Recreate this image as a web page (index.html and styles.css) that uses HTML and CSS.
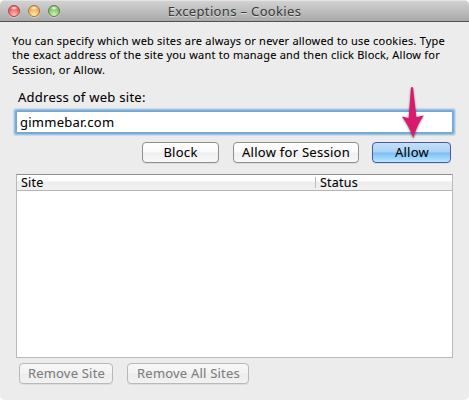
FILE: index.html
```html
<!DOCTYPE html>
<html lang="en">
<head>
<meta charset="utf-8">
<title>Exceptions – Cookies</title>
<link rel="stylesheet" href="styles.css">
</head>
<body>
<main class="window">
  <header class="titlebar">
    <div class="lights"><i class="light red"></i><i class="light amber"></i><i class="light green"></i></div>
    <h1 class="title">Exceptions – Cookies</h1>
  </header>
  <p class="intro">You can specify which web sites are always or never allowed to use cookies. Type<br>the exact address of the site you want to manage and then click Block, Allow for<br>Session, or Allow.</p>
  <label class="label" for="site">Address of web site:</label>
  <input class="field" id="site" type="text" value="gimmebar.com">
  <div class="actions">
    <button class="btn block">Block</button>
    <button class="btn session">Allow for Session</button>
    <button class="btn allow">Allow</button>
  </div>
  <section class="table">
    <div class="thead"><span class="th site">Site</span><span class="th status">Status</span></div>
  </section>
  <footer class="footer">
    <button class="btn off remove" disabled>Remove Site</button>
    <button class="btn off remove-all" disabled>Remove All Sites</button>
  </footer>
  <svg class="arrow" width="30" height="58" viewBox="0 0 30 58">
    <path d="M13 1.5Q14 .4 15 1.5L18.4 31L25.8 29.6Q19.5 38 15.3 52Q10 38 3.8 30.5L10.6 32Z"/>
  </svg>
</main>
</body>
</html>
```
FILE: styles.css
```css
* { box-sizing: border-box; }
body { margin: 0; background: #fff; font-family: "Noto Sans", "Open Sans", sans-serif; font-size: 13px; color: #000; -webkit-text-stroke: .08px; }
.window { position: relative; width: 469px; height: 400px; overflow: hidden; background: #ececec; border-radius: 5px; display: flex; flex-direction: column; white-space: nowrap; }
.titlebar { display: grid; grid-template-columns: 60px 1fr 60px; flex: none; height: 22px; align-items: center; background: linear-gradient(#d2d2d2, #a9a9a9); border-top: 1px solid #e4e4e4; border-bottom: 1px solid #515151; }
.lights { display: flex; gap: 8px; padding-left: 8px; }
.light { width: 12px; height: 12px; border-radius: 50%; border: 1px solid; box-shadow: 0 1px 0 #ffffff66; }
.red { border-color: #a34a4a; background: radial-gradient(ellipse 4px 2px at 50% 20%, #fff, transparent), radial-gradient(circle at 50% 90%, #ffc0b8, #ed4e50 75%); }
.amber { border-color: #aa773d; background: radial-gradient(ellipse 4px 2px at 50% 20%, #fff, transparent), radial-gradient(circle at 50% 90%, #ffedaa, #efa344 75%); }
.green { border-color: #588448; background: radial-gradient(ellipse 4px 2px at 50% 20%, #fff, transparent), radial-gradient(circle at 50% 90%, #d5f5b5, #74b85e 75%); }
.title { margin: 0; font-size: 13px; font-weight: 400; line-height: 20px; color: #3c3c3c; text-align: center; text-shadow: 0 1px 0 #ffffff80; letter-spacing: .35px; }
.intro { margin: 12px 0 0 12px; font-size: 11px; line-height: 14.3px; letter-spacing: .22px; }
.label { margin: 11px 0 0 18px; line-height: 18px; letter-spacing: .27px; }
.field { margin: 5px 0 0 16px; width: 437px; height: 22px; padding: 0 0 0 3px; border: 1px solid #76a7d2; border-radius: 1px; outline: none; background: #fff; box-shadow: 0 0 0 1px #7cadd8, 0 0 0 2px #9fc3e2, 0 0 1px 3px #c7dbeb; font: inherit; letter-spacing: .25px; -webkit-text-stroke: inherit; }
.actions { display: flex; margin: 9px 0 0 142px; height: 21px; }
.btn { height: 21px; padding: 0; border: 1px solid #8e8e8e; border-radius: 4px; background: linear-gradient(#fff, #fafafa 48%, #efefef 52%, #f8f8f8); font: inherit; line-height: 19px; color: #000; letter-spacing: .27px; box-shadow: 0 1px 0 #00000010; }
.block { width: 77px; }
.session { width: 126px; margin-left: 14px; }
.allow { width: 79px; margin-left: 13px; padding-left: 1px; border-color: #4c57a0; background: linear-gradient(#c5e0f8, #a9d2f6 48%, #7dbdf3 52%, #a9e0ff 90%, #b8e9ff); }
.table { margin: 11px 0 0 16px; width: 437px; height: 184px; border: 1px solid #b9b9b9; border-top-color: #8e8e8e; background: #fff; }
.thead { display: flex; height: 16px; align-items: center; border-bottom: 1px solid #b5b5b5; background: linear-gradient(#fff, #fff 35%, #ededed 50%, #f0f0f0); font-size: 12.5px; line-height: 15px; letter-spacing: .2px; }
.site { width: 298px; padding-left: 4px; }
.status { height: 11px; line-height: 11px; padding-left: 4px; border-left: 1px solid #bbb; }
.footer { display: flex; gap: 14px; margin: 5px 0 0 19px; }
.off { border-color: #b9b9b9; background: linear-gradient(#f6f6f6, #f3f3f3 48%, #ededed 52%, #f2f2f2); color: #7d7d7d; letter-spacing: .2px; padding-left: 1px; }
.remove { width: 94px; }
.remove-all { width: 122px; }
.arrow { position: absolute; left: 398px; top: 86px; fill: #d81b6c; filter: drop-shadow(0 1px 1px #00000073); }
```
